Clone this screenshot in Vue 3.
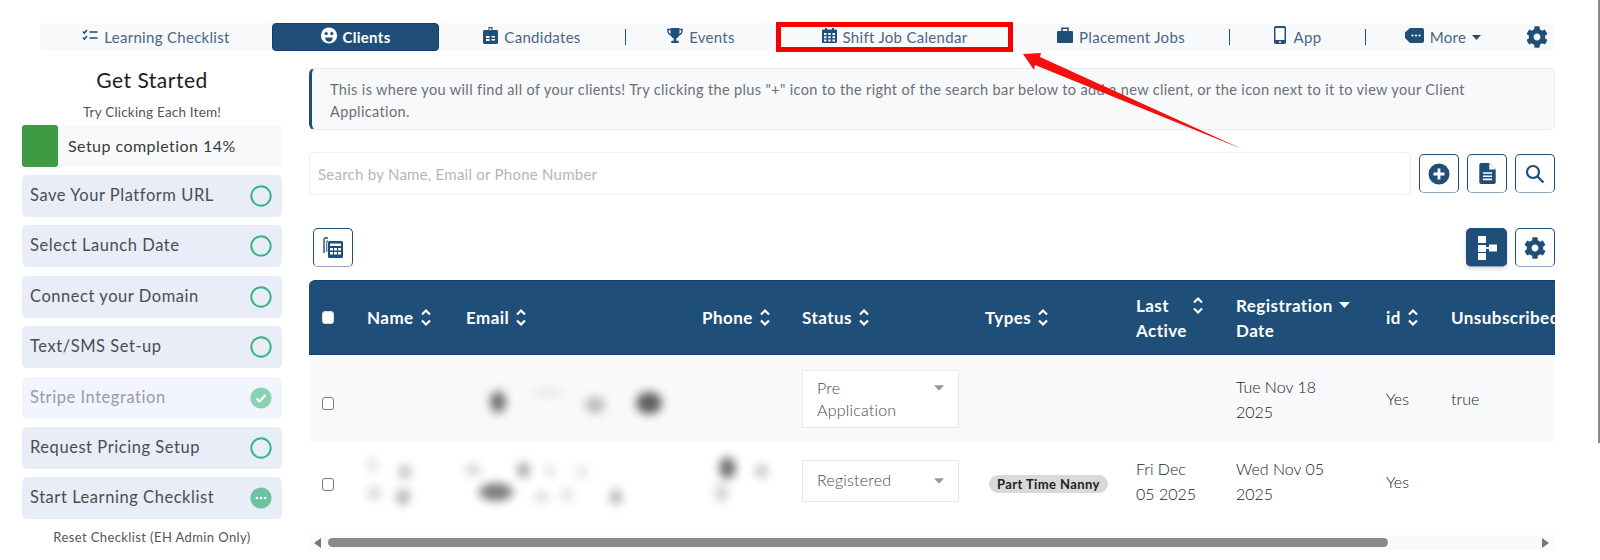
<script setup>
const steps = [
  { label: 'Save Your Platform URL', state: 'open' },
  { label: 'Select Launch Date', state: 'open' },
  { label: 'Connect your Domain', state: 'open' },
  { label: 'Text/SMS Set-up', state: 'open' },
  { label: 'Stripe Integration', state: 'done' },
  { label: 'Request Pricing Setup', state: 'open' },
  { label: 'Start Learning Checklist', state: 'progress' }
]

const columns = [
  { key: 'check', check: true },
  { key: 'name', lines: ['Name'], sort: 'both' },
  { key: 'email', lines: ['Email'], sort: 'both' },
  { key: 'phone', lines: ['Phone'], sort: 'both' },
  { key: 'status', lines: ['Status'], sort: 'both' },
  { key: 'types', lines: ['Types'], sort: 'both' },
  { key: 'last', lines: ['Last', 'Active'], sort: 'both' },
  { key: 'reg', lines: ['Registration', 'Date'], sort: 'down' },
  { key: 'id', lines: ['id'], sort: 'both' },
  { key: 'unsub', lines: ['Unsubscribed'] }
]

// redacted bits of the rows: centre x, centre y (relative to the table), size, strength
const blurs = [
  [189, 122, 16, 22, 0.75], [239, 113, 30, 8, 0.1], [286, 125, 20, 16, 0.35], [340, 123, 26, 22, 0.85],
  [63, 185, 9, 16, 0.15], [96, 192, 12, 14, 0.35], [65, 213, 14, 14, 0.2], [94, 217, 14, 16, 0.4],
  [164, 190, 16, 12, 0.22], [214, 190, 13, 16, 0.45], [241, 191, 10, 12, 0.16], [273, 192, 10, 12, 0.16],
  [187, 212, 34, 18, 0.7], [233, 217, 14, 12, 0.2], [258, 215, 14, 14, 0.15], [307, 217, 12, 16, 0.4],
  [418, 188, 17, 22, 0.75], [452, 191, 13, 14, 0.3], [412, 213, 13, 18, 0.25]
]

function blurStyle(b) {
  return {
    left: b[0] - b[2] / 2 + 'px',
    top: b[1] - b[3] / 2 + 'px',
    width: b[2] + 'px',
    height: b[3] + 'px',
    opacity: b[4]
  }
}
</script>

<template>
  <div class="page">
    <nav class="nav">
      <a class="nav-item">
        <svg class="nav-icon" width="16" height="12" viewBox="0 0 16 12" fill="none" stroke="#1f4e79" stroke-width="1.6"><path d="M1 2.6l1.4 1.4L5 1M1 8.6L2.4 10 5 7M7.5 3h8M7.5 9h8" /></svg>
        <span>Learning Checklist</span>
      </a>
      <a class="nav-item active">
        <svg class="nav-icon" width="18" height="17" viewBox="0 0 18 18"><circle cx="9" cy="9" r="8.6" fill="#fff" /><circle cx="6" cy="7" r="1.7" fill="#1f4e79" /><circle cx="12" cy="7" r="1.7" fill="#1f4e79" /><path d="M5 11h8c0 3-2 4.5-4 4.5S5 14 5 11z" fill="#1f4e79" /></svg>
        <span>Clients</span>
      </a>
      <a class="nav-item">
        <svg class="nav-icon" width="15" height="17" viewBox="0 0 15 17"><path d="M5.5 0h4v4h-4z" fill="#1f4e79" /><rect y="3" width="15" height="14" rx="1.4" fill="#1f4e79" /><rect x="6.5" y="1.2" width="2" height="2" fill="#f8f9fb" /><path d="M3 9h3.5v2H3zM3 12h3.5v2H3zM8.5 9H12v1.4H8.5zM8.5 12H12v1.4H8.5z" fill="#fff" /></svg>
        <span>Candidates</span>
      </a>
      <i class="nav-sep"></i>
      <a class="nav-item">
        <svg class="nav-icon" width="16" height="15" viewBox="0 0 16 15"><path d="M3.5 0h9v5.5c0 2.6-1.6 4.4-3.2 4.9v2.3h2.4V15H4.3v-2.3h2.4v-2.3C5.100 9.900 3.500 8.100 3.500 5.500z" fill="#1f4e79" /><path d="M3.500 1.500H.8c0 3 1 5 3.600 5.500M12.500 1.500h2.700c0 3-1 5-3.600 5.500" fill="none" stroke="#1f4e79" stroke-width="1.3" /></svg>
        <span>Events</span>
      </a>
      <a class="nav-item marked">
        <svg class="nav-icon" width="15" height="15" viewBox="0 0 15 15"><path d="M3 0h2v2H3zM10 0h2v2h-2z" fill="#1f4e79" /><rect y="1.500" width="15" height="13.500" rx="1.200" fill="#1f4e79" /><path d="M2 5h2.500v2H2zM6.200 5h2.500v2H6.200zM10.500 5H13v2h-2.500zM2 8.200h2.500v2H2zM6.200 8.200h2.500v2H6.200zM10.500 8.200H13v2h-2.500zM2 11.400h2.500v2H2zM6.200 11.400h2.500v2H6.200zM10.500 11.400H13v2h-2.500z" fill="#fff" /></svg>
        <span>Shift Job Calendar</span>
      </a>
      <a class="nav-item">
        <svg class="nav-icon" width="16" height="16" viewBox="0 0 16 16"><rect y="4" width="16" height="12" rx="1.300" fill="#1f4e79" /><path d="M5 4V1.200h6V4" fill="none" stroke="#1f4e79" stroke-width="1.600" /></svg>
        <span>Placement Jobs</span>
      </a>
      <i class="nav-sep"></i>
      <a class="nav-item wide-gap">
        <svg class="nav-icon" width="12" height="18" viewBox="0 0 12 18"><rect width="12" height="18" rx="2" fill="#1f4e79" /><rect x="1.500" y="2" width="9" height="12" fill="#fff" /><circle cx="6" cy="16" r="1" fill="#fff" /></svg>
        <span>App</span>
      </a>
      <i class="nav-sep"></i>
      <a class="nav-item">
        <svg class="nav-icon" width="19" height="15" viewBox="0 0 19 15"><path d="M5 0h12a2 2 0 0 1 2 2v11a2 2 0 0 1-2 2H5L0 10V4.500z" fill="#1f4e79" /><circle cx="7.500" cy="7.500" r="1.100" fill="#fff" /><circle cx="11" cy="7.500" r="1.100" fill="#fff" /><circle cx="14.500" cy="7.500" r="1.100" fill="#fff" /></svg>
        <span>More</span>
        <svg class="caret" width="9" height="5" viewBox="0 0 9 5"><path d="M0 0h9L4.500 5z" fill="#1f4e79" /></svg>
      </a>
      <a class="nav-item">
        <svg width="22" height="22" viewBox="0 0 512 512"><path fill="#1f4e79" d="M487.400 315.700l-42.600-24.600c4.300-23.200 4.300-47 0-70.200l42.600-24.600c4.900-2.800 7.100-8.600 5.500-14-11.100-35.600-30-67.800-54.700-94.600-3.800-4.100-10-5.100-14.800-2.300L380.800 110c-17.900-15.400-38.500-27.300-60.800-35.100V25.800c0-5.600-3.900-10.500-9.400-11.700-36.700-8.200-74.300-7.800-109.200 0-5.500 1.200-9.400 6.100-9.400 11.700V75c-22.200 7.900-42.800 19.800-60.800 35.100L88.700 85.500c-4.900-2.800-11-1.900-14.800 2.300-24.700 26.700-43.600 58.900-54.700 94.600-1.700 5.400.6 11.200 5.500 14L67.300 221c-4.300 23.200-4.300 47 0 70.200l-42.600 24.600c-4.900 2.800-7.100 8.600-5.500 14 11.100 35.600 30 67.800 54.700 94.600 3.800 4.100 10 5.100 14.800 2.300l42.600-24.600c17.900 15.400 38.500 27.300 60.800 35.100v49.200c0 5.600 3.900 10.500 9.400 11.700 36.700 8.200 74.300 7.800 109.200 0 5.500-1.200 9.400-6.100 9.400-11.700v-49.200c22.200-7.900 42.800-19.800 60.800-35.100l42.600 24.600c4.900 2.800 11 1.900 14.800-2.300 24.700-26.700 43.600-58.900 54.700-94.600 1.500-5.500-.7-11.300-5.600-14.100zM256 336c-44.100 0-80-35.900-80-80s35.900-80 80-80 80 35.900 80 80-35.900 80-80 80z" /></svg>
      </a>
    </nav>

    <div class="main">
      <aside class="sidebar">
        <h2 class="side-title">Get Started</h2>
        <p class="side-sub">Try Clicking Each Item!</p>
        <div class="progress">
          <div class="progress-fill"></div>
          <span>Setup completion 14%</span>
        </div>
        <div class="steps">
          <div v-for="step in steps" :key="step.label" class="step" :class="step.state">
            <span>{{ step.label }}</span>
            <svg v-if="step.state === 'open'" width="22" height="22" viewBox="0 0 22 22"><circle cx="11" cy="11" r="9.700" fill="none" stroke="#2fb580" stroke-width="1.900" /></svg>
            <svg v-else-if="step.state === 'done'" width="22" height="22" viewBox="0 0 22 22"><circle cx="11" cy="11" r="10.600" fill="#8ad3b1" /><path d="M6.500 11.500l3 3 6-6.500" fill="none" stroke="#fff" stroke-width="2.200" /></svg>
            <svg v-else width="22" height="22" viewBox="0 0 22 22"><circle cx="11" cy="11" r="10.600" fill="#6bc49e" /><circle cx="6.800" cy="11" r="1.300" fill="#fff" /><circle cx="11" cy="11" r="1.300" fill="#fff" /><circle cx="15.200" cy="11" r="1.300" fill="#fff" /></svg>
          </div>
        </div>
        <p class="side-reset">Reset Checklist (EH Admin Only)</p>
      </aside>

      <section class="content">
        <div class="notice">
          This is where you will find all of your clients! Try clicking the plus "+" icon to the right of the search bar below to add a new client, or the icon next to it to view your Client<br />Application.
        </div>

        <div class="search-row">
          <div class="search-input">Search by Name, Email or Phone Number</div>
          <button class="icon-btn">
            <svg width="22" height="22" viewBox="0 0 22 22"><circle cx="11" cy="11" r="10.500" fill="#1f4e79" /><path d="M11 5.500v11M5.500 11h11" stroke="#fff" stroke-width="2.800" /></svg>
          </button>
          <button class="icon-btn">
            <svg width="17" height="21" viewBox="0 0 18 23"><path d="M2 0h9l7 7v14a2 2 0 0 1-2 2H2a2 2 0 0 1-2-2V2a2 2 0 0 1 2-2z" fill="#1f4e79" /><path d="M11 0v7h7z" fill="#fff" /><path d="M4 11h10M4 14.500h10M4 18h10" stroke="#fff" stroke-width="1.800" /></svg>
          </button>
          <button class="icon-btn">
            <svg width="20" height="20" viewBox="0 0 20 20" fill="none" stroke="#1f4e79" stroke-width="2.200"><circle cx="8" cy="8" r="6" /><path d="M12.500 12.500l6 6" /></svg>
          </button>
        </div>

        <div class="toolbar">
          <button class="icon-btn">
            <svg width="20" height="21" viewBox="0 0 20 21"><path d="M5 1H2.500A1.500 1.500 0 0 0 1 2.500V16" fill="none" stroke="#1f4e79" stroke-width="1.400" /><path d="M5 4H3.800v11" fill="none" stroke="#1f4e79" stroke-width="1" /><rect x="5" y="4" width="15" height="17" rx="1.500" fill="#1f4e79" /><path d="M7 6.500h11v2.500H7zM7 11h3v2.500H7zM11 11h3v2.500h-3zM15 11h3v2.500h-3zM7 15h3v2.500H7zM11 15h3v2.500h-3zM15 15h3v2.500h-3z" fill="#fff" /></svg>
          </button>
          <div class="toolbar-right">
            <button class="icon-btn solid">
              <svg width="20" height="24" viewBox="0 0 20 24"><path d="M1 0h8v7H1zM1 9h8v7H1zM1 17h8v7H1zM12 8.500h8v7h-8z" fill="#fff" /><path d="M9 12h3" stroke="#fff" stroke-width="2" /></svg>
            </button>
            <button class="icon-btn">
              <svg width="22" height="22" viewBox="0 0 512 512"><path fill="#1f4e79" d="M487.400 315.700l-42.600-24.600c4.300-23.200 4.300-47 0-70.200l42.600-24.600c4.900-2.800 7.100-8.600 5.500-14-11.100-35.600-30-67.800-54.700-94.600-3.800-4.100-10-5.100-14.800-2.300L380.800 110c-17.900-15.400-38.500-27.300-60.800-35.100V25.800c0-5.600-3.900-10.500-9.400-11.700-36.700-8.200-74.300-7.800-109.200 0-5.500 1.200-9.400 6.100-9.400 11.700V75c-22.200 7.900-42.800 19.800-60.800 35.100L88.700 85.500c-4.900-2.800-11-1.900-14.800 2.300-24.700 26.700-43.600 58.900-54.700 94.600-1.700 5.400.6 11.200 5.500 14L67.300 221c-4.300 23.200-4.300 47 0 70.200l-42.600 24.600c-4.900 2.800-7.100 8.600-5.500 14 11.100 35.600 30 67.800 54.700 94.600 3.800 4.100 10 5.100 14.800 2.300l42.600-24.600c17.900 15.400 38.500 27.300 60.800 35.100v49.200c0 5.600 3.900 10.500 9.400 11.700 36.700 8.200 74.300 7.800 109.200 0 5.500-1.200 9.400-6.100 9.400-11.700v-49.200c22.200-7.900 42.800-19.800 60.800-35.100l42.600 24.600c4.900 2.800 11 1.900 14.800-2.300 24.700-26.700 43.600-58.900 54.700-94.600 1.500-5.500-.7-11.300-5.600-14.100zM256 336c-44.100 0-80-35.900-80-80s35.900-80 80-80 80 35.900 80 80-35.900 80-80 80z" /></svg>
            </button>
          </div>
        </div>

        <div class="table-wrap">
          <table class="clients">
            <colgroup>
              <col v-for="c in columns" :key="c.key" :class="'col-' + c.key" />
            </colgroup>
            <thead>
              <tr>
                <th v-for="c in columns" :key="c.key" :class="'th-' + c.key">
                  <span v-if="c.check" class="box checked-head"></span>
                  <div v-else class="th-inner">
                    <div class="th-label">
                      <div v-for="line in c.lines" :key="line">{{ line }}</div>
                    </div>
                    <svg v-if="c.sort === 'both'" class="sort" width="12" height="19" viewBox="0 0 12 19" fill="none" stroke="#fff" stroke-width="2.200"><path d="M2 6.500L6 2.500l4 4M2 12.500l4 4 4-4" /></svg>
                    <svg v-else-if="c.sort === 'down'" class="sort-down" width="11" height="6" viewBox="0 0 11 6"><path d="M0 0h11L5.500 6z" fill="#fff" /></svg>
                  </div>
                </th>
              </tr>
            </thead>
            <tbody>
              <tr class="row-a">
                <td><span class="box"></span></td>
                <td></td>
                <td></td>
                <td></td>
                <td>
                  <div class="select two-line">
                    <span>Pre<br />Application</span>
                    <svg width="10" height="6" viewBox="0 0 11 6"><path d="M0 0h11L5.500 6z" fill="#999" /></svg>
                  </div>
                </td>
                <td></td>
                <td></td>
                <td>Tue Nov 18<br />2025</td>
                <td>Yes</td>
                <td>true</td>
              </tr>
              <tr class="row-b">
                <td><span class="box"></span></td>
                <td></td>
                <td></td>
                <td></td>
                <td>
                  <div class="select">
                    <span class="select-text">Registered</span>
                    <svg width="10" height="6" viewBox="0 0 11 6"><path d="M0 0h11L5.500 6z" fill="#999" /></svg>
                  </div>
                </td>
                <td><span class="pill">Part Time Nanny</span></td>
                <td>Fri Dec<br />05 2025</td>
                <td>Wed Nov 05<br />2025</td>
                <td>Yes</td>
                <td></td>
              </tr>
            </tbody>
          </table>
          <span v-for="(b, i) in blurs" :key="i" class="blur" :style="blurStyle(b)"></span>
        </div>

        <div class="hscroll">
          <i class="arrow-left"></i>
          <div class="thumb"></div>
          <i class="arrow-right"></i>
        </div>
      </section>
    </div>

    <div class="page-scroll"></div>

    <svg class="annotation" width="1600" height="560" viewBox="0 0 1600 560">
      <path d="M1023 54L1041 53L1040 57L1242 149L1035 65L1034 70z" fill="#f50f0f" />
    </svg>
  </div>
</template>

<style scoped>
.page {
  position: relative;
  width: 1600px;
  height: 560px;
  overflow: hidden;
  padding-top: 23px;
  box-sizing: border-box;
  font-family: Lato, "Open Sans", sans-serif;
  color: #333;
  background: #fff;
}

.nav {
  display: grid;
  grid-template-columns: 232px 167px 186px 1px 150px 237px 216px 1px 135px 1px 154px 34px;
  align-items: center;
  height: 28px;
  margin-left: 40px;
  width: 1514px;
  background: #f8f9fb;
  border-radius: 4px;
}

.nav-item {
  display: flex;
  align-items: center;
  justify-content: center;
  gap: 6px;
  height: 28px;
  font-size: 15px;
  letter-spacing: 0.3px;
  color: #4a6583;
}

.nav-icon {
  margin-bottom: 4px;
  flex: none;
}

.wide-gap {
  gap: 8px;
}

.nav-item.active {
  background: #1f4e79;
  color: #fff;
  font-weight: 700;
  border-radius: 4px;
  border: 1px solid #123f6d;
  box-sizing: border-box;
  gap: 4px;
}

.nav-item.marked {
  height: 30px;
  margin: -1px 0;
  box-sizing: border-box;
  border: 5px solid #f50000;
  outline: 1px solid rgba(255, 255, 255, 0.2);
  outline-offset: -6px;
}

.nav-sep {
  display: block;
  width: 1px;
  height: 16px;
  background: #1f4e79;
}

.main {
  display: flex;
  margin-top: 17px;
  margin-left: 22px;
  width: 1533px;
  gap: 27px;
}

.sidebar {
  width: 260px;
  flex: none;
}

.side-title {
  margin: 0;
  font-size: 21px;
  line-height: 24px;
  font-weight: 400;
  text-align: center;
  color: #1d1d1d;
  letter-spacing: 0.5px;
}

.side-sub {
  margin: 10px 0 3px;
  font-size: 13.5px;
  line-height: 20px;
  text-align: center;
  color: #555;
  letter-spacing: 0.2px;
}

.progress {
  display: flex;
  align-items: center;
  height: 42px;
  background: #f8f9fb;
  border-radius: 4px;
  font-size: 16px;
  color: #3a3a3a;
  letter-spacing: 0.45px;
}

.progress-fill {
  width: 36px;
  height: 42px;
  margin-right: 10px;
  background: #3f9b43;
  border-radius: 3px;
}

.progress span {
  padding-bottom: 2px;
}

.steps {
  display: flex;
  flex-direction: column;
  gap: 8.4px;
  margin-top: 8px;
}

.step {
  display: flex;
  align-items: center;
  justify-content: space-between;
  height: 42px;
  padding: 0 10px 0 8px;
  background: #e8edf8;
  border-radius: 5px;
  font-size: 16.5px;
  letter-spacing: 0.55px;
  color: #4a4d55;
}

.step span {
  padding-bottom: 2px;
}

.step.done {
  background: #f2f5fd;
  color: #9a9ca2;
}

.side-reset {
  margin: 9px 0 0;
  font-size: 13px;
  line-height: 18px;
  text-align: center;
  color: #555;
  letter-spacing: 0.4px;
}

.content {
  width: 1246px;
  flex: none;
}

.notice {
  height: 62px;
  box-sizing: border-box;
  padding: 10px 10px 0 18px;
  background: #f8f9fb;
  border: 1px solid #e8eaef;
  border-left: 3px solid #1f4e79;
  border-radius: 6px;
  font-size: 14.500px;
  line-height: 22px;
  color: #6b6f76;
  letter-spacing: 0.36px;
}

.search-row {
  display: flex;
  align-items: center;
  gap: 8px;
  margin-top: 22px;
}

.search-input {
  flex: 1;
  display: flex;
  align-items: center;
  height: 43px;
  padding-left: 8px;
  box-sizing: border-box;
  border: 1px solid #eceef2;
  border-radius: 4px;
  font-size: 15px;
  color: #b4b6ba;
  letter-spacing: 0.25px;
}

.icon-btn {
  display: flex;
  align-items: center;
  justify-content: center;
  width: 40px;
  height: 39px;
  padding: 0;
  background: #fff;
  border: 1px solid #1f4e79;
  border-bottom-color: #8fa6bd;
  border-radius: 5px;
}

.icon-btn.solid {
  width: 41px;
  background: #1f4e79;
  box-shadow: 0 2px 4px rgba(0, 0, 0, 0.15);
}

.toolbar {
  display: flex;
  justify-content: space-between;
  margin-top: 33px;
  padding-left: 4px;
}

.toolbar-right {
  display: flex;
  gap: 8px;
}

.table-wrap {
  position: relative;
  margin-top: 13px;
  width: 1246px;
  height: 255px;
  overflow: hidden;
}

.clients {
  width: 1333px;
  table-layout: fixed;
  border-collapse: separate;
  border-spacing: 0;
  font-size: 16px;
  line-height: 25px;
  font-weight: 300;
  color: #222;
}

.col-check { width: 49px; }
.col-name { width: 99px; }
.col-email { width: 236px; }
.col-phone { width: 100px; }
.col-status { width: 183px; }
.col-types { width: 151px; }
.col-last { width: 100px; }
.col-reg { width: 150px; }
.col-id { width: 65px; }
.col-unsub { width: 200px; }

.clients th {
  height: 75px;
  box-sizing: border-box;
  padding: 0 0 0 9px;
  background: #1f4e79;
  border-top: 1px solid #123f6d;
  border-bottom: 1px solid #123f6d;
  color: #fff;
  font-weight: 700;
  font-size: 17px;
  letter-spacing: 0.45px;
  text-align: left;
  vertical-align: middle;
  white-space: nowrap;
  overflow: hidden;
}

.clients th:first-child {
  border-top-left-radius: 6px;
  padding-left: 13px;
}

.th-inner {
  display: flex;
  align-items: center;
  gap: 6px;
}

.th-last .th-inner {
  align-items: flex-start;
}

.th-last .th-label {
  width: 50px;
}

.th-last .sort {
  margin-top: 3px;
}

.th-reg .sort-down {
  margin-top: -26px;
}

.clients td {
  box-sizing: border-box;
  padding: 0 0 0 9px;
  vertical-align: middle;
}

.clients td:first-child {
  padding-left: 13px;
}

.row-a td {
  height: 87px;
  background: #f8f9fb;
}

.row-b td {
  height: 78px;
  background: #fff;
}

.row-a .box {
  margin-top: 9px;
}

.row-b .box {
  margin-top: 6px;
}

.box {
  display: block;
  width: 12px;
  height: 13px;
  box-sizing: border-box;
  border: 1px solid #777;
  border-radius: 3px;
  background: #fff;
}

.checked-head {
  border-color: #ddd;
}

.select {
  display: flex;
  align-items: center;
  justify-content: space-between;
  width: 157px;
  height: 42px;
  padding: 0 14px 0 14px;
  box-sizing: border-box;
  background: #fff;
  border: 1px solid #e6e8ec;
  font-size: 16px;
  line-height: 21.500px;
  color: #454950;
  letter-spacing: 0.2px;
}

.select-text {
  padding-bottom: 3px;
}

.select.two-line {
  height: 58px;
}

.select.two-line svg {
  margin-top: -21px;
}

.pill {
  display: inline-block;
  margin-left: 4px;
  padding: 0 8px;
  height: 18px;
  line-height: 18px;
  background: #d9d9d9;
  border-radius: 9px;
  font-size: 13px;
  letter-spacing: 0.4px;
  font-weight: 700;
  color: #222;
  white-space: nowrap;
  vertical-align: middle;
}

.blur {
  position: absolute;
  background: #444;
  border-radius: 50%;
  filter: blur(5px);
}

.hscroll {
  display: flex;
  align-items: center;
  width: 1246px;
  height: 15px;
  background: #fafafa;
}

.arrow-left {
  margin-left: 5px;
  width: 0;
  height: 0;
  border: 5px solid transparent;
  border-left: 0;
  border-right: 7px solid #777;
}

.thumb {
  width: 1060px;
  height: 9px;
  margin-left: 7px;
  background: #888;
  border-radius: 5px;
}

.arrow-right {
  margin-left: 154px;
  width: 0;
  height: 0;
  border: 5px solid transparent;
  border-right: 0;
  border-left: 7px solid #777;
}

.page-scroll {
  position: absolute;
  top: 0;
  right: 0;
  width: 2px;
  height: 443px;
  background: #8a8a8a;
}

.annotation {
  position: absolute;
  top: 0;
  left: 0;
  pointer-events: none;
}
</style>
